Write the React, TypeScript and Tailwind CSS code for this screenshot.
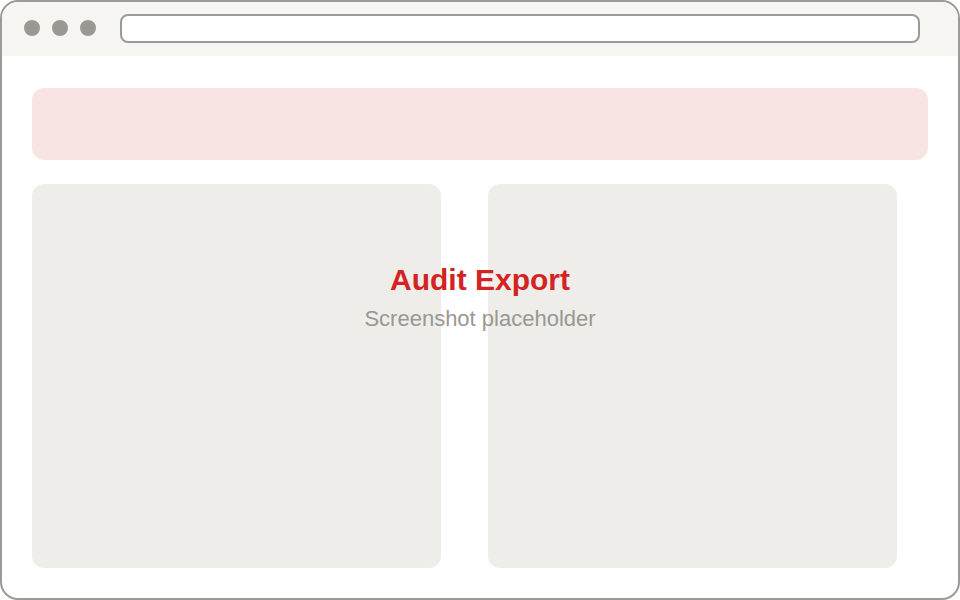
import React from 'react'

const Dot: React.FC = () => <span className="w-4 h-4 rounded-full bg-[#9a9893] shrink-0" />

export default function App() {
  return (
    <div className="w-[960px] h-[600px] bg-white font-['Liberation_Sans',Arial,sans-serif]">
      <div className="relative w-full h-full border-2 border-[#9b9a97] rounded-[18px] overflow-hidden flex flex-col">
        {/* Browser chrome */}
        <div className="h-[54px] shrink-0 bg-[#f6f5f2] flex items-center pl-[22px] pr-[38px] pb-[2px]">
          <div className="flex items-center gap-3">
            <Dot />
            <Dot />
            <Dot />
          </div>
          <div className="ml-6 flex-1 h-[29px] bg-white border-2 border-[#9b9a97] rounded-lg" />
        </div>

        {/* Page body */}
        <div className="flex-1 flex flex-col px-[30px] pt-8 pb-[30px] gap-6">
          <div className="h-[72px] shrink-0 rounded-xl bg-[#f8e4e3]" />
          <div className="flex-1 flex gap-[47px]">
            <div className="w-[409px] rounded-xl bg-[#eeede9]" />
            <div className="w-[409px] rounded-xl bg-[#eeede9]" />
          </div>
        </div>

        {/* Placeholder label */}
        <div className="absolute inset-0 flex flex-col items-center justify-center pb-[5px] pointer-events-none">
          <div className="text-[30px] leading-[36px] font-bold text-[#d42323]">Audit Export</div>
          <div className="text-[22px] leading-[28px] mt-[7px] text-[#9a9893]">Screenshot placeholder</div>
        </div>
      </div>
    </div>
  )
}
